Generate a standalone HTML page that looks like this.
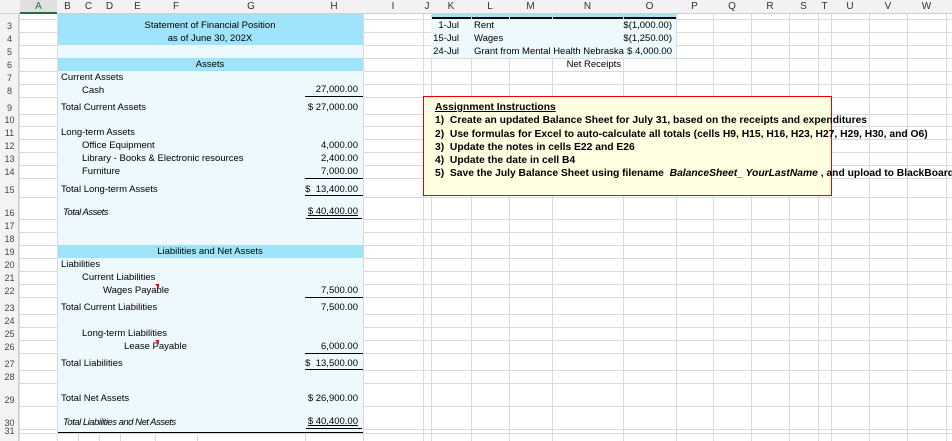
<!DOCTYPE html>
<html><head><meta charset="utf-8"><style>
*{margin:0;padding:0;box-sizing:border-box}
body{width:952px;height:441px;overflow:hidden;background:#fff;position:relative;font-family:"Liberation Sans",sans-serif;font-size:9.5px;color:#000}
.a{position:absolute}
.v{position:absolute;top:14px;bottom:0;width:1px;background:#dadada}
.h{position:absolute;left:19px;right:0;height:1px;background:#dadada}
.t{position:absolute;height:13px;line-height:13px;white-space:nowrap}
.r{text-align:right}
.hd{position:absolute;top:0;height:14px;line-height:14px;text-align:center;color:#333;font-size:10px}
.rn{position:absolute;left:0;width:19px;text-align:center;font-size:9px;color:#444;height:12px;line-height:12px}
.ul{position:absolute;height:1px;background:#000}
.i{font-style:italic;letter-spacing:-0.5px}
.ins{position:absolute;left:435px;font-weight:bold;font-size:10.3px;white-space:nowrap;height:13px;line-height:13px}
</style></head><body>
<div class="a" style="left:0;top:0;width:952px;height:14px;background:#f3f1f3;border-bottom:1px solid #cfcfcf"></div>
<div class="a" style="left:20px;top:0;width:37px;height:14px;background:#e0e0e0;border-bottom:2px solid #1e7145"></div>
<div class="a" style="left:0;top:14px;width:19px;height:427px;background:#f3f3f3;border-right:1px solid #cfcfcf"></div>
<div class="a" style="left:57px;top:14px;width:306px;height:419px;background:#eef9fe"></div>
<div class="a" style="left:57px;top:432px;width:306px;height:2px;background:#000"></div>
<div class="a" style="left:431px;top:14px;width:245px;height:4px;background:#a0e4fb"></div>
<div class="a" style="left:431px;top:17px;width:245px;height:2px;background:#000"></div>
<div class="v" style="left:19px"></div><div class="v" style="left:57px"></div>
<div class="v" style="left:363px"></div><div class="v" style="left:423px"></div>
<div class="v" style="left:431px"></div><div class="v" style="left:471px"></div><div class="v" style="left:509px"></div>
<div class="v" style="left:552px"></div><div class="v" style="left:623px"></div><div class="v" style="left:676px"></div>
<div class="v" style="left:713px"></div><div class="v" style="left:751px"></div><div class="v" style="left:789px"></div>
<div class="v" style="left:818px"></div><div class="v" style="left:831px"></div><div class="v" style="left:869px"></div>
<div class="v" style="left:907px"></div><div class="v" style="left:946px"></div>
<div class="a" style="left:78px;top:433px;width:1px;height:8px;background:#dadada"></div>
<div class="a" style="left:99px;top:433px;width:1px;height:8px;background:#dadada"></div>
<div class="a" style="left:120px;top:433px;width:1px;height:8px;background:#dadada"></div>
<div class="a" style="left:155px;top:433px;width:1px;height:8px;background:#dadada"></div>
<div class="a" style="left:197px;top:433px;width:1px;height:8px;background:#dadada"></div>
<div class="a" style="left:305px;top:433px;width:1px;height:8px;background:#dadada"></div>
<div class="h" style="top:19px"></div><div class="h" style="top:32px"></div><div class="h" style="top:45px"></div>
<div class="h" style="top:58px"></div><div class="h" style="top:71px"></div><div class="h" style="top:84px"></div>
<div class="h" style="top:97px"></div><div class="h" style="top:114px"></div><div class="h" style="top:126px"></div>
<div class="h" style="top:139px"></div><div class="h" style="top:152px"></div><div class="h" style="top:165px"></div>
<div class="h" style="top:178px"></div><div class="h" style="top:197px"></div><div class="h" style="top:219px"></div>
<div class="h" style="top:232px"></div><div class="h" style="top:245px"></div><div class="h" style="top:258px"></div>
<div class="h" style="top:271px"></div><div class="h" style="top:284px"></div><div class="h" style="top:297px"></div>
<div class="h" style="top:314px"></div><div class="h" style="top:327px"></div><div class="h" style="top:340px"></div>
<div class="h" style="top:353px"></div><div class="h" style="top:370px"></div><div class="h" style="top:383px"></div>
<div class="h" style="top:406px"></div><div class="h" style="top:429px"></div><div class="h" style="top:433px"></div>
<div class="a" style="left:58px;top:14px;width:305px;height:31px;background:#a0e4fb"></div>
<div class="a" style="left:58px;top:45px;width:305px;height:13px;background:#eef9fe"></div>
<div class="a" style="left:58px;top:58px;width:305px;height:13px;background:#a0e4fb"></div>
<div class="a" style="left:58px;top:71px;width:305px;height:174px;background:#eef9fe"></div>
<div class="a" style="left:58px;top:245px;width:305px;height:13px;background:#a0e4fb"></div>
<div class="a" style="left:58px;top:258px;width:305px;height:174px;background:#eef9fe"></div>
<div class="a" style="left:431px;top:19px;width:245px;height:39px;background:#eef9fe"></div>
<div class="hd" style="left:20px;width:37px;color:#1e7145">A</div>
<div class="hd" style="left:57px;width:21px">B</div><div class="hd" style="left:78px;width:21px">C</div>
<div class="hd" style="left:99px;width:21px">D</div><div class="hd" style="left:120px;width:35px">E</div>
<div class="hd" style="left:155px;width:42px">F</div><div class="hd" style="left:197px;width:108px">G</div>
<div class="hd" style="left:305px;width:58px">H</div><div class="hd" style="left:363px;width:60px">I</div>
<div class="hd" style="left:423px;width:8px">J</div><div class="hd" style="left:431px;width:40px">K</div>
<div class="hd" style="left:471px;width:38px">L</div><div class="hd" style="left:509px;width:43px">M</div>
<div class="hd" style="left:552px;width:71px">N</div><div class="hd" style="left:623px;width:53px">O</div>
<div class="hd" style="left:676px;width:37px">P</div><div class="hd" style="left:713px;width:38px">Q</div>
<div class="hd" style="left:751px;width:38px">R</div><div class="hd" style="left:789px;width:29px">S</div>
<div class="hd" style="left:818px;width:13px">T</div><div class="hd" style="left:831px;width:38px">U</div>
<div class="hd" style="left:869px;width:38px">V</div><div class="hd" style="left:907px;width:39px">W</div>
<div class="rn" style="top:20px">3</div><div class="rn" style="top:33px">4</div><div class="rn" style="top:46px">5</div>
<div class="rn" style="top:59px">6</div><div class="rn" style="top:72px">7</div><div class="rn" style="top:85px">8</div>
<div class="rn" style="top:102px">9</div><div class="rn" style="top:114px">10</div><div class="rn" style="top:127px">11</div>
<div class="rn" style="top:140px">12</div><div class="rn" style="top:153px">13</div><div class="rn" style="top:166px">14</div>
<div class="rn" style="top:184px">15</div><div class="rn" style="top:207px">16</div><div class="rn" style="top:220px">17</div>
<div class="rn" style="top:233px">18</div><div class="rn" style="top:246px">19</div><div class="rn" style="top:259px">20</div>
<div class="rn" style="top:272px">21</div><div class="rn" style="top:285px">22</div><div class="rn" style="top:302px">23</div>
<div class="rn" style="top:315px">24</div><div class="rn" style="top:328px">25</div><div class="rn" style="top:341px">26</div>
<div class="rn" style="top:358px">27</div><div class="rn" style="top:371px">28</div><div class="rn" style="top:394px">29</div>
<div class="rn" style="top:417px">30</div><div class="rn" style="top:425px">31</div>
<div class="t" style="left:57px;width:306px;top:19px;text-align:center">Statement of Financial Position</div>
<div class="t" style="left:57px;width:306px;top:32px;text-align:center">as of June 30, 202X</div>
<div class="t" style="left:57px;width:306px;top:58px;text-align:center">Assets</div>
<div class="t" style="left:61px;top:71px">Current Assets</div>
<div class="t" style="left:82px;top:84px">Cash</div>
<div class="t r" style="left:300px;width:58px;top:83px">27,000.00</div>
<div class="ul" style="left:305px;width:58px;top:96px"></div>
<div class="t" style="left:61px;top:101px">Total Current Assets</div>
<div class="t r" style="left:300px;width:58px;top:101px">$ 27,000.00</div>
<div class="t" style="left:61px;top:126px">Long-term Assets</div>
<div class="t" style="left:82px;top:139px">Office Equipment</div>
<div class="t r" style="left:300px;width:58px;top:139px">4,000.00</div>
<div class="t" style="left:82px;top:152px">Library - Books &amp; Electronic resources</div>
<div class="t r" style="left:300px;width:58px;top:152px">2,400.00</div>
<div class="t" style="left:82px;top:165px">Furniture</div>
<div class="t r" style="left:300px;width:58px;top:165px">7,000.00</div>
<div class="ul" style="left:305px;width:58px;top:178px"></div>
<div class="t" style="left:61px;top:183px">Total Long-term Assets</div>
<div class="t r" style="left:300px;width:58px;top:183px">$&nbsp; 13,400.00</div>
<div class="ul" style="left:305px;width:58px;top:195px"></div>
<div class="t i" style="left:63px;top:206px">Total Assets</div>
<div class="t r" style="left:300px;width:58px;top:205px;text-decoration:underline">$ 40,400.00</div>
<div class="ul" style="left:306px;width:56px;top:218px"></div>
<div class="t" style="left:57px;width:306px;top:245px;text-align:center">Liabilities and Net Assets</div>
<div class="t" style="left:61px;top:258px">Liabilities</div>
<div class="t" style="left:82px;top:271px">Current Liabilities</div>
<div class="t" style="left:103px;top:284px">Wages Payable</div>
<div class="a" style="left:155px;top:284px;width:0;height:0;border-top:4px solid #e00;border-left:4px solid transparent"></div>
<div class="t r" style="left:300px;width:58px;top:284px">7,500.00</div>
<div class="ul" style="left:305px;width:58px;top:297px"></div>
<div class="t" style="left:61px;top:301px">Total Current Liabilities</div>
<div class="t r" style="left:300px;width:58px;top:301px">7,500.00</div>
<div class="t" style="left:82px;top:327px">Long-term Liabilities</div>
<div class="t" style="left:124px;top:340px">Lease Payable</div>
<div class="a" style="left:155px;top:340px;width:0;height:0;border-top:4px solid #e00;border-left:4px solid transparent"></div>
<div class="t r" style="left:300px;width:58px;top:340px">6,000.00</div>
<div class="ul" style="left:305px;width:58px;top:353px"></div>
<div class="t" style="left:61px;top:357px">Total Liabilities</div>
<div class="t r" style="left:300px;width:58px;top:357px">$&nbsp; 13,500.00</div>
<div class="ul" style="left:305px;width:58px;top:369px"></div>
<div class="t" style="left:61px;top:392px">Total Net Assets</div>
<div class="t r" style="left:300px;width:58px;top:392px">$ 26,900.00</div>
<div class="t i" style="left:63px;top:416px">Total Liabilities and Net Assets</div>
<div class="t r" style="left:300px;width:58px;top:415px;text-decoration:underline">$ 40,400.00</div>
<div class="ul" style="left:306px;width:56px;top:428px"></div>
<div class="t r" style="left:431px;width:28px;top:19px">1-Jul</div>
<div class="t" style="left:474px;top:19px">Rent</div>
<div class="t r" style="left:600px;width:72px;top:19px">$(1,000.00)</div>
<div class="t r" style="left:431px;width:28px;top:32px">15-Jul</div>
<div class="t" style="left:474px;top:32px">Wages</div>
<div class="t r" style="left:600px;width:72px;top:32px">$(1,250.00)</div>
<div class="t r" style="left:431px;width:28px;top:45px">24-Jul</div>
<div class="t" style="left:474px;top:45px">Grant from Mental Health Nebraska</div>
<div class="t r" style="left:600px;width:72px;top:45px">$ 4,000.00</div>
<div class="t r" style="left:540px;width:81px;top:58px">Net Receipts</div>
<div class="a" style="left:423px;top:96px;width:409px;height:100px;background:#ffffe1;border:1px solid #e00"></div>
<div class="ins" style="top:101px;text-decoration:underline">Assignment Instructions</div>
<div class="ins" style="top:114px">1)&nbsp; Create an updated Balance Sheet for July 31, based on the receipts and expenditures</div>
<div class="ins" style="top:128px">2)&nbsp; Use formulas for Excel to auto-calculate all totals (cells H9, H15, H16, H23, H27, H29, H30, and O6)</div>
<div class="ins" style="top:141px">3)&nbsp; Update the notes in cells E22 and E26</div>
<div class="ins" style="top:154px">4)&nbsp; Update the date in cell B4</div>
<div class="ins" style="top:167px">5)&nbsp; Save the July Balance Sheet using filename&nbsp; <i>BalanceSheet_ YourLastName</i> , and upload to BlackBoard</div>
</body></html>
